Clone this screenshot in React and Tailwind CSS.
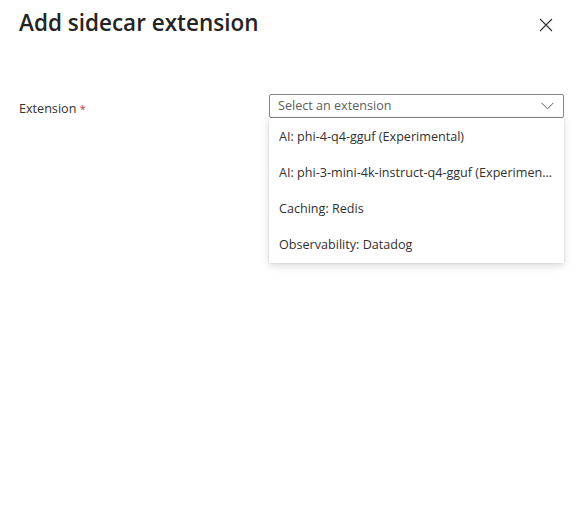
export default function App() {
  const items = [
    "AI: phi-4-q4-gguf (Experimental)",
    "AI: phi-3-mini-4k-instruct-q4-gguf (Experimental)",
    "Caching: Redis",
    "Observability: Datadog",
  ];
  return (
    <div className="w-[583px] h-[515px] bg-white text-[#323130] font-['Open_Sans',sans-serif] overflow-hidden">
      <div className="flex items-start justify-between pl-[19px] pr-[30px] pt-[7px]">
        <h1 className="text-[22.5px] font-semibold leading-[32px] text-[#252423]">Add sidecar extension</h1>
        <svg width="14" height="14" viewBox="0 0 14 14" className="mt-[11px]">
          <path d="M1 1 L13 13 M13 1 L1 13" stroke="#323130" strokeWidth="1.1" fill="none" />
        </svg>
      </div>
      <div className="flex items-start pl-[19px] pt-[55px]">
        <div className="w-[250px] text-[12.6px] leading-[24px] pt-[3px]">
          Extension <span className="text-[#c4314b] text-[11px] align-top">*</span>
        </div>
        <div className="relative w-[295px]">
          <div className="flex items-center justify-between h-[24px] border border-[#8a8886] rounded-[2px] pl-[8px] pr-[9px]">
            <span className="text-[12.6px] text-[#605e5c] pt-[1px]">Select an extension</span>
            <svg width="13" height="8" viewBox="0 0 13 8">
              <path d="M0.5 0.8 L6.5 6.8 L12.5 0.8" stroke="#605e5c" strokeWidth="1" fill="none" />
            </svg>
          </div>
          <div className="absolute left-0 top-[24px] w-[295px] bg-white pt-[1px] shadow-[0_3px_8px_rgba(0,0,0,0.14),0_0_2px_rgba(0,0,0,0.12)]">
            {items.map((t) => (
              <div key={t} className="h-[36px] flex items-center px-[10px] text-[12.6px] text-[#323130]">
                <span className="truncate">{t}</span>
              </div>
            ))}
          </div>
        </div>
      </div>
    </div>
  );
}
